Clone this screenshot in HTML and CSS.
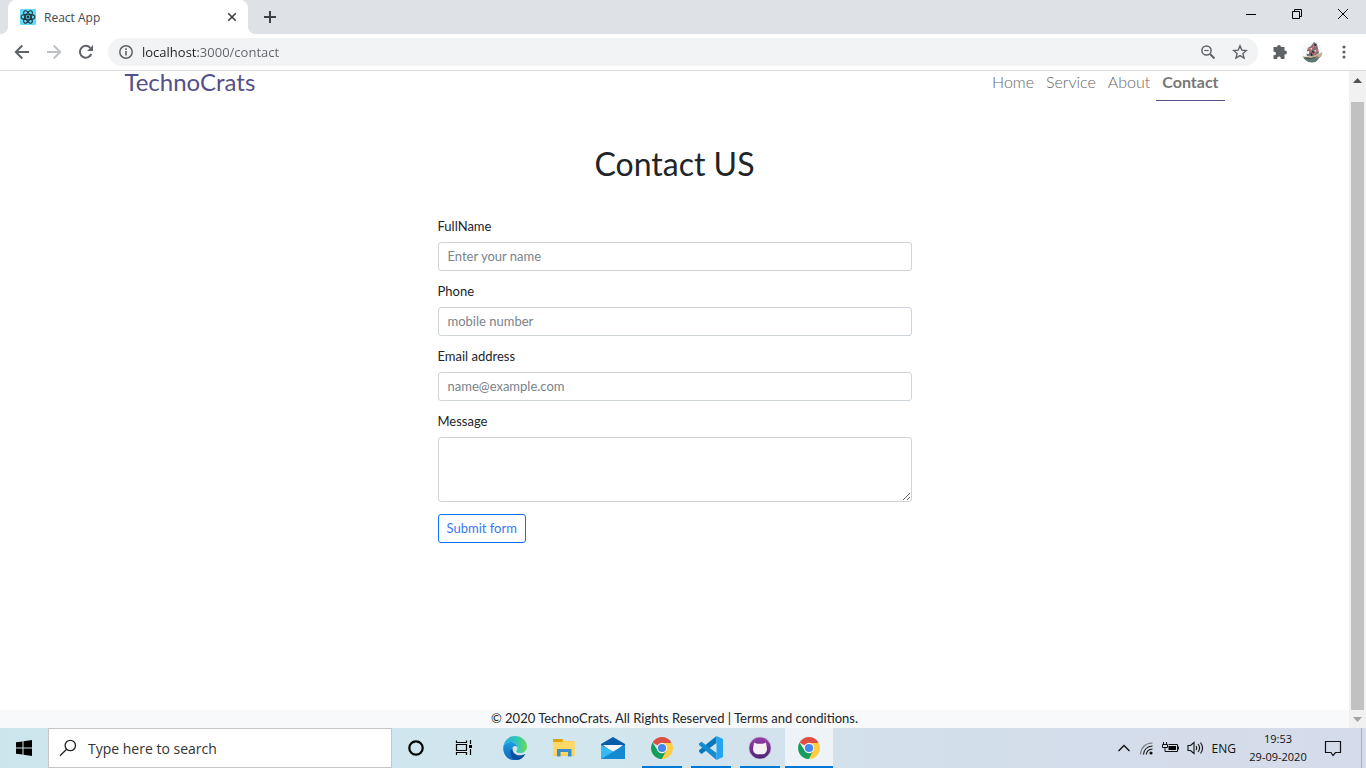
FILE: index.html
```html
<!DOCTYPE html>
<html lang="en">
<head>
<meta charset="utf-8">
<meta name="viewport" content="width=device-width, initial-scale=1">
<title>React App</title>
<link rel="stylesheet" href="styles.css">
</head>
<body class="desktop">
<header class="browser">
  <div class="tabstrip">
    <div class="tab">
      <svg class="favicon" width="16" height="16" viewBox="0 0 16 16"><rect width="16" height="16" rx="1" fill="#61dafb"/><g fill="none" stroke="#20343c" stroke-width="1.1"><ellipse cx="8" cy="8" rx="6.9" ry="2.7"/><ellipse cx="8" cy="8" rx="6.9" ry="2.7" transform="rotate(60 8 8)"/><ellipse cx="8" cy="8" rx="6.9" ry="2.7" transform="rotate(120 8 8)"/></g><circle cx="8" cy="8" r="1.4" fill="#20343c"/></svg>
      <span class="tab-title">React App</span>
      <button class="tab-close" aria-label="Close tab"><svg width="16" height="16" viewBox="0 0 16 16"><path d="M4.2 4.2l7.6 7.6M11.800 4.200l-7.600 7.600" stroke="#3c4043" stroke-width="1.6"/></svg></button>
    </div>
    <button class="new-tab" aria-label="New tab"><svg width="16" height="16" viewBox="0 0 16 16"><path d="M8 2v12M2 8h12" stroke="#3c4043" stroke-width="2"/></svg></button>
    <div class="window-controls">
      <button aria-label="Minimize"><svg width="12" height="12" viewBox="0 0 12 12"><path d="M1 6.5h10" stroke="#000"/></svg></button>
      <button aria-label="Restore"><svg width="12" height="12" viewBox="0 0 12 12"><path d="M1.500 3.500h7v7h-7zM3.500 3.500v-2h7v7h-2" fill="none" stroke="#000"/></svg></button>
      <button aria-label="Close"><svg width="12" height="12" viewBox="0 0 12 12"><path d="M1 1l10 10M11 1L1 11" stroke="#000"/></svg></button>
    </div>
  </div>
  <div class="toolbar">
    <div class="history">
      <button aria-label="Back"><svg width="16" height="16" viewBox="0 0 16 16"><path d="M15 8H2M8.300 1.500L1.800 8l6.500 6.500" fill="none" stroke="#5f6368" stroke-width="2"/></svg></button>
      <button aria-label="Forward"><svg width="16" height="16" viewBox="0 0 16 16"><path d="M1 8h13M7.700 1.500L14.200 8l-6.500 6.500" fill="none" stroke="#bdc1c6" stroke-width="2"/></svg></button>
      <button aria-label="Reload"><svg width="16" height="16" viewBox="0 0 16 16"><path d="M13.300 10a5.900 5.900 0 1 1-1.100-6.200" fill="none" stroke="#5f6368" stroke-width="2"/><path d="M15 1v6H9z" fill="#5f6368"/></svg></button>
    </div>
    <div class="omnibox">
      <svg width="16" height="16" viewBox="0 0 16 16"><circle cx="8" cy="8" r="6.200" fill="none" stroke="#5f6368" stroke-width="1.500"/><path d="M8 7v4.500M8 4.300v1.600" stroke="#5f6368" stroke-width="1.600"/></svg>
      <input class="address" type="text" aria-label="Address" value="localhost:3000/contact">
      <button aria-label="Zoom"><svg width="16" height="16" viewBox="0 0 16 16"><circle cx="6.500" cy="6.500" r="4.600" fill="none" stroke="#5f6368" stroke-width="1.500"/><path d="M10 10l4.500 4.500" stroke="#5f6368" stroke-width="1.900"/><path d="M4.300 6.500h4.400" stroke="#5f6368" stroke-width="1.200"/></svg></button>
      <button aria-label="Bookmark"><svg width="16" height="16" viewBox="0 0 16 16"><path d="M8 1.900l1.800 4.200 4.600.4-3.500 3 1.100 4.500L8 11.600 4 14l1.100-4.500-3.500-3 4.600-.4z" fill="none" stroke="#5f6368" stroke-width="1.400"/></svg></button>
    </div>
    <div class="extras">
      <button aria-label="Extensions"><svg width="16" height="16" viewBox="0 0 16 16"><path d="M5 3a2 2 0 0 1 4 0h3.500v3.500H13a2 2 0 0 1 0 4h-.5V15H8.800v-.8a1.800 1.800 0 0 0-3.600 0v.8H1.500v-3.700h.7a1.800 1.800 0 0 0 0-3.600h-.7V3z" fill="#5f6368"/></svg></button>
      <button aria-label="Profile"><svg width="22" height="22" viewBox="0 0 22 22"><defs><clipPath id="face"><circle cx="11" cy="11" r="10.500"/></clipPath></defs><g clip-path="url(#face)"><path fill="#f7f8f8" d="M0 0h22v22H0z"/><path d="M5 12l2-5 3-2 3-4 3 2 1 5 1 4-6 4-6-1z" fill="#777078"/><path d="M7 7l3 2 3-4M6 12l4-2 3 3 4-5M12 3l3 3" stroke="#c76f72" stroke-width="1.600" fill="none"/><path d="M5 10h3v3H5zM9 7h2v2zM13 9h2v2" fill="#e7e9ea"/><path d="M11 10l2 2M14 3v2M10 12l1 3" stroke="#30313b" stroke-width="1.500"/><path d="M0 15c6 2 13 0 22-4l-2 5-6 2-7 1z" fill="#c1ad91"/><path d="M1 16c5 2 10 1 18 0l-5 6H7z" fill="#617674"/><path d="M2 16l8 1 8-2-5 2-6 1z" fill="#2e423d"/></g></svg></button>
      <button aria-label="Menu"><svg width="16" height="16" viewBox="0 0 16 16" fill="#5f6368"><circle cx="8" cy="3" r="1.600"/><circle cx="8" cy="8" r="1.600"/><circle cx="8" cy="13" r="1.600"/></svg></button>
    </div>
  </div>
</header>

<div class="viewport">
  <div class="page">
    <nav class="navbar">
      <a class="brand" href="#">TechnoCrats</a>
      <div class="nav-links">
        <a class="nav-link" href="#">Home</a>
        <a class="nav-link" href="#">Service</a>
        <a class="nav-link" href="#">About</a>
        <a class="nav-link active" href="#" aria-current="page">Contact</a>
      </div>
    </nav>
    <main class="content">
      <h1 class="title">Contact US</h1>
      <form class="contact-form">
        <div class="field"><label for="fullname">FullName</label><input class="control" id="fullname" type="text" placeholder="Enter your name"></div>
        <div class="field"><label for="phone">Phone</label><input class="control" id="phone" type="tel" placeholder="mobile number"></div>
        <div class="field"><label for="email">Email address</label><input class="control" id="email" type="email" placeholder="name@example.com"></div>
        <div class="field"><label for="message">Message</label><textarea class="control message" id="message"></textarea></div>
        <button class="submit" type="submit">Submit form</button>
      </form>
    </main>
    <footer class="footer">© 2020 TechnoCrats. All Rights Reserved | Terms and conditions.</footer>
  </div>
  <div class="scrollbar">
    <button aria-label="Scroll up"><svg width="9" height="5" viewBox="0 0 9 5"><path d="M0 5l4.500-5L9 5z" fill="#505050"/></svg></button>
    <div class="track"><div class="thumb"></div></div>
    <button aria-label="Scroll down"><svg width="9" height="5" viewBox="0 0 9 5"><path d="M0 0l4.500 5L9 0z" fill="#a3a3a3"/></svg></button>
  </div>
</div>

<div class="taskbar">
  <button class="task" aria-label="Start"><svg width="16" height="16" viewBox="0 0 16 16"><path d="M0 2.300l6.500-.9v6.100H0zM7.500 1.200L16 0v7.500H7.500zM0 8.500h6.500v6.100L0 13.700zM7.500 8.500H16V16l-8.500-1.200z"/></svg></button>
  <div class="search">
    <svg width="18" height="18" viewBox="0 0 18 18"><circle cx="11.300" cy="6.500" r="5.200" fill="none" stroke="#222" stroke-width="1.300"/><path d="M7.600 10.200L1 16.800" stroke="#222" stroke-width="1.300"/></svg>
    <input class="search-input" type="text" aria-label="Search" placeholder="Type here to search">
  </div>
  <button class="task" aria-label="Cortana"><svg width="16" height="16" viewBox="0 0 16 16"><circle cx="8" cy="8" r="6.700" fill="none" stroke="#000" stroke-width="2.200"/></svg></button>
  <button class="task" aria-label="Task view"><svg width="18" height="18" viewBox="0 0 18 18"><path d="M1.500 1.500v2h10v-2M1.500 16v-2.500h10V16M1.500 5.500h10v6h-10zM15.500 1v4M15.500 10v6" fill="none" stroke="#000" stroke-width="1.200"/><path d="M14 6h3v3h-3z"/></svg></button>
  <div class="apps">
    <button class="task" aria-label="Edge"><svg width="24" height="24" viewBox="0 0 24 24"><defs><linearGradient id="edge-top"><stop stop-color="#1ca9e3"/><stop offset=".6" stop-color="#34c9b2"/><stop offset="1" stop-color="#6bdc55"/></linearGradient><linearGradient id="edge-left" x2="0" y2="1"><stop stop-color="#1b9de2"/><stop offset="1" stop-color="#1267bd"/></linearGradient></defs><path d="M.3 11C1 4.500 6 0 12 0c7 0 12 5 12 10.600 0 4-3 6.500-6.500 6.500-2.800 0-4.200-1-4.200-1.900 0-.7 1.200-1.200 1.200-3C14.500 9 12 6 8 6 4 6 1.300 8 .3 11z" fill="url(#edge-top)"/><path d="M.2 12C.3 8.500 4 6 8 6c3.500 0 6 2.400 6.400 5.500C13.700 10.300 12.500 10 11.500 10c-2.200 1-3.500 3.300-3.500 6 0 4 3 7 7 7.600C6 26 0 19.500.2 12z" fill="url(#edge-left)"/><path d="M9.600 11.700c-.8 5.800 5 9.800 12.800 6.300C20 22 17.500 24 13.500 24 8 23.500 5.200 15 9.600 11.700z" fill="#0d4f9c"/></svg></button>
    <button class="task" aria-label="File Explorer"><svg width="22" height="20" viewBox="0 0 22 20"><path d="M0 1h10l2 2h9.500v15H0z" fill="#ffcf55"/><path d="M0 1h9.500v3H0z" fill="#dda10d"/><path d="M0 4h21.500v12H0z" fill="#ffd966"/><path d="M4 11h14.500v7.500H15V14H7.500v4.500H4z" fill="#3c8dcc"/></svg></button>
    <button class="task" aria-label="Mail"><svg width="24" height="24" viewBox="0 0 24 24"><path d="M0 8l12-7 12 7v6H0z" fill="#075cab"/><path d="M2 9h20l-10 8z" fill="#f6f7f8"/><path d="M0 9l12 6.500L24 9v14H0z" fill="#23a9e8"/><path d="M0 23L24 9v14z" fill="#1689d5"/><path d="M0 9v14l12-7.500z" fill="#35bbf4"/></svg></button>
    <button class="task running" aria-label="Chrome"><svg width="24" height="24" viewBox="0 0 24 24"><path d="M12 12L2.500 6.500A11 11 0 0 1 21.500 6.500z" fill="#dd4f43"/><path d="M12 12V7h9.800A11 11 0 0 1 11.800 23z" fill="#ffcd42"/><path d="M2.500 6.500A11 11 0 0 0 11.800 23L16.300 14.500 12 16.800 7.700 14.500z" fill="#159e5b"/><circle cx="12" cy="12" r="5.200" fill="#f5f5f5"/><circle cx="12" cy="12" r="4.100" fill="#4787ed"/></svg></button>
    <button class="task running" aria-label="Visual Studio Code"><svg width="24" height="24" viewBox="0 0 24 24"><path d="M17.500 0v7L2.500 18 0 15.800v-1.500z" fill="#0878be"/><path d="M0 9V7.500L2.500 5.700 17.500 17v7z" fill="#168bd0"/><path d="M17.500 0L24 3v18l-6.500 3z" fill="#25a5ef"/></svg></button>
    <button class="task running" aria-label="GitHub Desktop"><svg width="24" height="24" viewBox="0 0 24 24"><defs><linearGradient id="github" x2="0" y2="1"><stop stop-color="#9642a7"/><stop offset="1" stop-color="#4d2378"/></linearGradient></defs><circle cx="12" cy="12" r="11" fill="url(#github)" stroke="#c7bed0" stroke-width=".6"/><path d="M6 6.500l3 1.200h6l3-1.200.6 4c1.200 4-.6 7.200-3.600 7.700H9C5.800 17.700 4.300 14.500 5.400 10.500z" fill="#f5f1f5"/></svg></button>
    <button class="task running current" aria-label="Chrome, React App"><svg width="24" height="24" viewBox="0 0 24 24"><path d="M12 12L2.500 6.500A11 11 0 0 1 21.500 6.500z" fill="#dd4f43"/><path d="M12 12V7h9.800A11 11 0 0 1 11.800 23z" fill="#ffcd42"/><path d="M2.500 6.500A11 11 0 0 0 11.800 23L16.300 14.500 12 16.800 7.700 14.500z" fill="#159e5b"/><circle cx="12" cy="12" r="5.200" fill="#f5f5f5"/><circle cx="12" cy="12" r="4.100" fill="#4787ed"/></svg></button>
  </div>
  <div class="tray">
    <button aria-label="Show hidden icons"><svg width="16" height="16" viewBox="0 0 16 16"><path d="M2.500 11L8 5.500l5.500 5.500" fill="none" stroke="#111" stroke-width="1.400"/></svg></button>
    <button aria-label="Network"><svg width="16" height="16" viewBox="0 0 16 16" fill="none" stroke="#111" stroke-width="1.100"><path d="M1.500 14.500C2 8 6 3.300 13.500 3" stroke="#777"/><path d="M4.500 14.500c.3-4.500 3.500-8.200 9-8.500M7.300 14.500c.3-3 2.500-5.300 6.200-5.500"/><circle cx="12" cy="13" r="1.600" fill="#111" stroke="none"/></svg></button>
    <button aria-label="Battery"><svg width="18" height="16" viewBox="0 0 18 16"><path d="M6.500 4.500H15.500v7H5M16.500 6.500v3M1.500 2v2M4.500 2v2M.5 4.500h5v3h-5zM3 7.500v4h3" fill="none" stroke="#111"/><path d="M6.500 6H14v4H6.500z"/></svg></button>
    <button aria-label="Volume"><svg width="18" height="16" viewBox="0 0 18 16" fill="none" stroke="#111" stroke-width="1.100"><path d="M1 5.500h2.500L7 2.500v11l-3.500-3H1zM9 6c1 1.500 1 2.500 0 4M11 4c2 2.500 2 5.500 0 8M13.500 2.500c3 4 3 7 0 11"/></svg></button>
    <button class="language">ENG</button>
    <button class="clock"><span>19:53</span><span>29-09-2020</span></button>
    <button class="notice" aria-label="Notifications"><svg width="18" height="18" viewBox="0 0 18 18"><path d="M1.500 2.500h15v11h-5L9 16.500l-2-3H1.500z" fill="none" stroke="#111" stroke-width="1.200"/></svg></button>
    <button class="show-desktop" aria-label="Show desktop"></button>
  </div>
</div>
</body>
</html>
```
FILE: styles.css
```css
* { box-sizing: border-box; }

button {
  padding: 0;
  border: 0;
  background: none;
  color: inherit;
  font: inherit;
}

input, textarea { font: inherit; }

svg { display: block; flex: none; }

.desktop {
  display: flex;
  flex-direction: column;
  min-height: 100vh;
  margin: 0;
  background: #fff;
  color: #212529;
  font: 12px "Open Sans", sans-serif;
}

/* Browser frame */
.tabstrip {
  display: flex;
  align-items: stretch;
  height: 34px;
  padding-left: 8px;
  background: #dee1e6;
}

.tab {
  position: relative;
  display: flex;
  align-items: center;
  gap: 8px;
  width: 240px;
  padding: 0 8px 0 12px;
  border-radius: 8px 8px 0 0;
  background: #fff;
  color: #45494d;
}

/* Flared feet where the tab meets the toolbar */
.tab::before, .tab::after {
  content: "";
  position: absolute;
  bottom: 0;
  width: 8px;
  height: 8px;
}

.tab::before {
  right: 100%;
  background: radial-gradient(circle at 0 0, transparent 8px, #fff 8px);
}

.tab::after {
  left: 100%;
  background: radial-gradient(circle at 100% 0, transparent 8px, #fff 8px);
}

.tab-title { flex: 1; }

.new-tab { padding: 0 14px; }

.window-controls {
  display: flex;
  margin-left: auto;
  padding-bottom: 6px;
}

.window-controls button {
  display: grid;
  place-items: center;
  width: 46px;
}

.toolbar {
  display: flex;
  align-items: center;
  height: 37px;
  padding: 0 14px;
  border-bottom: 1px solid #dadce0;
}

.history { display: flex; gap: 16px; }

.omnibox {
  display: flex;
  flex: 1;
  align-items: center;
  gap: 16px;
  height: 28px;
  margin: 0 14px;
  padding: 0 10px;
  border-radius: 14px;
  background: #f1f3f4;
}

.address {
  flex: 1;
  min-width: 0;
  margin-left: -8px;
  padding: 0;
  border: 0;
  background: linear-gradient(90deg, #202124 56px, #5f6368 56px);
  background-clip: text;
  color: transparent;
  font-size: 13px;
}

.extras {
  display: flex;
  align-items: center;
  gap: 13px;
}

/* Web page */
.viewport { display: flex; flex: 1; }

.page {
  display: flex;
  flex: 1;
  flex-direction: column;
  min-width: 0;
  font-family: Lato, sans-serif;
  font-size: 13px;
}

.navbar {
  display: flex;
  justify-content: space-between;
  width: calc(100% * 10 / 12);
  height: 30px;
  margin: 0 auto;
  padding: 0 12px;
}

.brand {
  color: #55508a;
  font-size: 24px;
  line-height: 22px;
  text-decoration: none;
}

.nav-links { display: flex; }

.nav-link {
  padding: 0 6px;
  color: #666;
  font-size: 16px;
  font-weight: 300;
  line-height: 22px;
  text-decoration: none;
}

.nav-link.active {
  border-bottom: 1px solid #55508a;
  color: #777;
  font-weight: 700;
}

.content { flex: 1; padding: 43px 12px 24px; }

.title {
  margin: 0 0 33px;
  font-size: 32px;
  font-weight: 400;
  line-height: 40px;
  text-align: center;
}

.contact-form {
  display: grid;
  gap: 12px;
  max-width: 474px;
  margin: 0 auto;
}

.field { display: grid; gap: 7px; line-height: 18px; }

.field + .field { margin-top: -1px; }

.control {
  width: 100%;
  height: 29px;
  padding: 0 9px 2px;
  border: 1px solid #ced4da;
  border-radius: 3px;
  background: #fff;
  color: #212529;
}

.control::placeholder { color: #7b838a; }

.message { display: block; height: 65px; resize: vertical; }

.submit {
  justify-self: start;
  height: 29px;
  padding: 0 8px 2px;
  border: 1px solid #0d6efd;
  border-radius: 3px;
  color: #3878f5;
}

.footer {
  padding-bottom: 2px;
  background: #f8f9fa;
  line-height: 16px;
  text-align: center;
}

.scrollbar {
  display: flex;
  flex-direction: column;
  width: 17px;
  background: #f1f1f1;
}

.scrollbar button {
  display: grid;
  place-items: center;
  height: 18px;
}

.track {
  display: flex;
  flex: 1;
  flex-direction: column;
  padding: 13px 2px 0;
}

.thumb { flex: 1; background: #c1c1c1; }

/* Taskbar */
.taskbar {
  display: flex;
  height: 40px;
  background: linear-gradient(90deg, #cce5ed, #d2e6ee 45%, #d3deeb 70%, #d5dbea);
  color: #111;
}

.task {
  display: grid;
  place-items: center;
  width: 48px;
  height: 40px;
}

.search {
  display: flex;
  align-items: center;
  gap: 11px;
  width: 344px;
  padding: 0 10px;
  border: 1px solid #c4c7c8;
  background: #fff;
}

.search-input {
  flex: 1;
  min-width: 0;
  padding: 0;
  border: 0;
  background: none;
  font-size: 14px;
}

.search-input::placeholder { color: #333; }

.apps { display: flex; gap: 1px; margin-left: 3px; }

.running {
  background: linear-gradient(#0078d7, #0078d7) center bottom / 40px 2px no-repeat;
}

.running.current {
  background-color: #edf3f7;
  background-size: 48px 2px;
}

.tray { display: flex; align-items: center; gap: 7px; margin-left: auto; }

.clock {
  display: grid;
  width: 70px;
  font-size: 11px;
  line-height: 18px;
  text-align: center;
}

.notice { padding: 0 12px 0 4px; }

.show-desktop {
  align-self: stretch;
  width: 5px;
  border-left: 1px solid #a5b0c0;
}
```
